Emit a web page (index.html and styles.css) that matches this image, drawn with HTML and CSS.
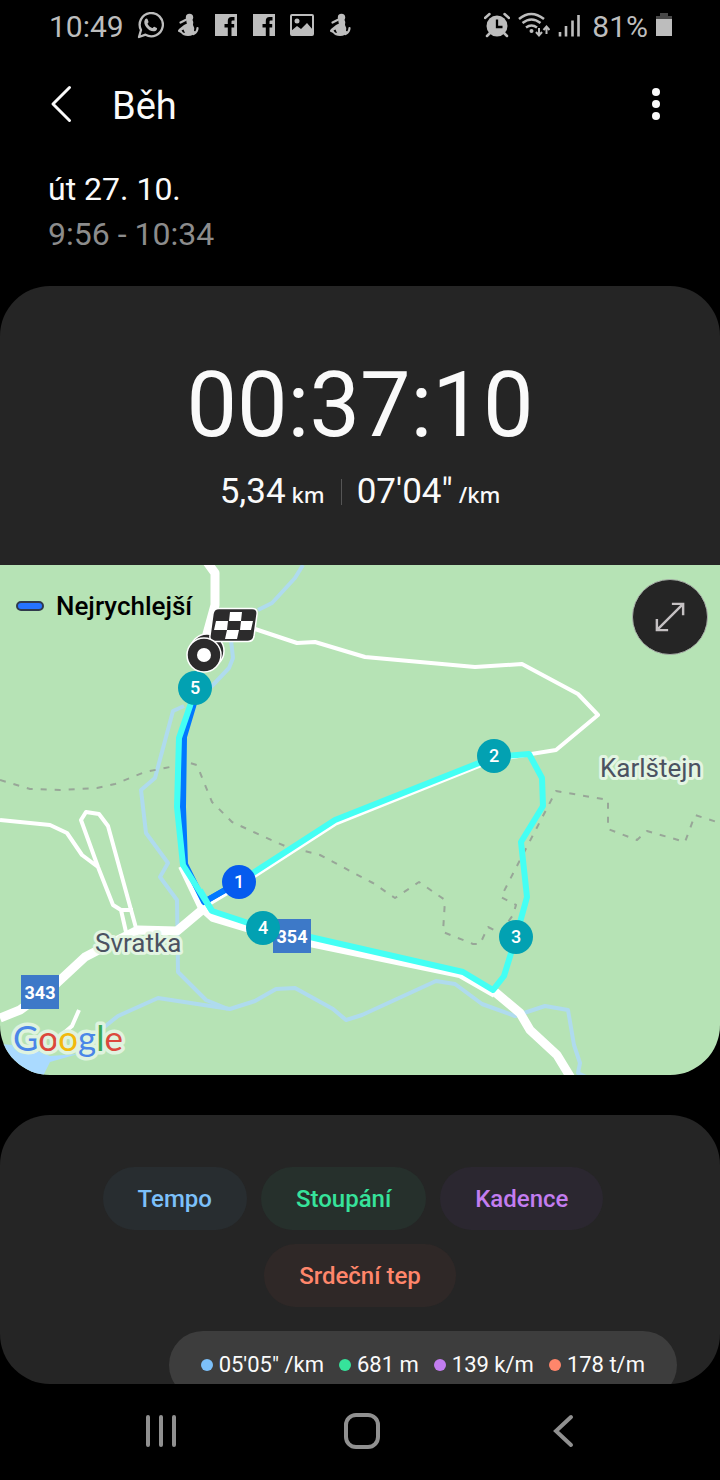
FILE: index.html
```html
<!DOCTYPE html>
<html lang="cs">
<head>
<meta charset="utf-8">
<meta name="viewport" content="width=device-width, initial-scale=1">
<title>Běh</title>
<link rel="stylesheet" href="styles.css">
</head>
<body>
<svg width="0" height="0" class="defs" aria-hidden="true">
  <symbol id="figure" viewBox="0 0 28 28">
    <path d="M6.500 10.500l6-3M23.500 16q0 4-4 6" fill="none" stroke="currentColor" stroke-width="2.200" stroke-linecap="round"/>
    <circle cx="15.500" cy="5.500" r="3.700" fill="currentColor"/>
    <path d="M12.500 8h6q1.500 2 .5 5 2 3 1 6 1 0 1.500 1-2 4-7.500 4-5 0-7-3l-3-1.500q-.500-1 1-2.500l5-4 3-1.500q-1-1.500-.500-3.500z" fill="currentColor"/>
    <path d="M7.500 18.500l2-1 1.500 3.500-2-.500z" fill="#000"/>
  </symbol>
  <symbol id="fb" viewBox="0 0 28 28">
    <path d="M3 2h22v22h-5.500v-8.500h2.700v-3.500h-2.700V9.500q0-1 1.200-1h1.800V5h-3q-3.700 0-3.700 4v3h-3.300v3.500h3.300V24H3z" fill="currentColor"/>
  </symbol>
</svg>
<div class="statusbar">
  <span class="clock">10:49</span>
  <div class="notices">
    <svg viewBox="0 0 28 28" aria-hidden="true"><path d="M3 25l2-7a11.600 11.600 0 1 1 4.500 4.700z" fill="none" stroke="currentColor" stroke-width="2.300" stroke-linejoin="round"/><path d="M9 7.500c1-1.500 2.300-1 2.700 0l.8 2.200c.2 1-1.200 1.700-.9 2.300 1 2 2.500 3.200 4.500 4 .8.200 1.400-1.600 2.200-1.300l2.500 1.300c.8.500-.2 2.500-1.500 3-3 1.200-7-1-9-3.800-2-2.700-2.700-5.500-1.300-7.700z" fill="currentColor"/></svg>
    <svg aria-hidden="true"><use href="#figure"/></svg>
    <svg aria-hidden="true"><use href="#fb"/></svg>
    <svg aria-hidden="true"><use href="#fb"/></svg>
    <svg viewBox="0 0 28 28" aria-hidden="true"><rect x="3" y="3" width="22" height="20" rx="1" fill="none" stroke="currentColor" stroke-width="2"/><circle cx="9" cy="9" r="2.500" fill="currentColor"/><path d="M3 19l6-5 4 3 6-6 6 7v5H3z" fill="currentColor"/></svg>
    <svg aria-hidden="true"><use href="#figure"/></svg>
  </div>
  <div class="system">
    <svg class="alarm" viewBox="0 0 26 28" aria-hidden="true"><circle cx="13" cy="14" r="10.500" fill="currentColor"/><path d="M1 6l4.500-4M25 6l-4.500-4M6 21l-3 3M20 21l3 3" stroke="currentColor" stroke-width="2.500" stroke-linecap="round"/><path d="M13 7.500V15h5.500" fill="none" stroke="#000" stroke-width="2.300"/></svg>
    <svg class="wifi" viewBox="0 0 32 28" aria-hidden="true"><path d="M1 7q12-10 25 0M4.500 11q9-7 18 0M8 15.500q5.500-4 11 0" fill="none" stroke="currentColor" stroke-width="2.500"/><circle cx="13.500" cy="19" r="2" fill="currentColor"/><path d="M21 16v7M18 20l3 3.500 3-3.500M28.500 22v-7M25.500 18l3-3.500 3 3.500" fill="none" stroke="currentColor" stroke-width="2"/></svg>
    <svg class="signal" viewBox="0 0 22 28" aria-hidden="true"><path d="M2 20v4.500M8 14v10.500M14.500 8.500v16M20.500 3v21.500" stroke="currentColor" stroke-width="2.600"/></svg>
    <span>81%</span>
    <svg class="battery" viewBox="0 0 16 28" aria-hidden="true"><path d="M4 1h8v3h4v4H0V4h4z" fill="#484848"/><path d="M0 7h16v17H0z" fill="currentColor"/></svg>
  </div>
</div>
<header class="appbar">
  <button class="icon-button" aria-label="Zpět"><svg viewBox="0 0 22 38" aria-hidden="true"><path d="M19.500 2.500L3 19l16.500 16.500" fill="none" stroke="currentColor" stroke-width="3" stroke-linecap="round" stroke-linejoin="round"/></svg></button>
  <h1>Běh</h1>
  <button class="icon-button more" aria-label="Další možnosti"><svg viewBox="0 0 22 38" aria-hidden="true"><g fill="currentColor"><circle cx="11" cy="7" r="4"/><circle cx="11" cy="19" r="4"/><circle cx="11" cy="31" r="4"/></g></svg></button>
</header>
<main class="content">
  <div class="when">
    <p>út 27. 10.</p>
    <p class="hours">9:56 - 10:34</p>
  </div>
  <section class="card workout">
    <div class="summary">
      <div class="timer">00:37:10</div>
      <div class="totals">
        <p>5,34<span>km</span></p>
        <p>07'04"<span>/km</span></p>
      </div>
    </div>
    <div class="map">
      <svg class="map-canvas" viewBox="0 565 720 510" role="img" aria-label="Mapa trasy">
        <path d="M0 1044l25 2 25 10 28-2-28 8-8 16H0z" fill="#aadaff"/>
        <g class="stream">
          <path d="M303 565l-8 13-23 25-14 7"/>
          <path d="M231 640l2 18-4 10-18 19M184 706l-11 5-18 67-14 12 5 43 22 30-8 14 17 23 1 72 28 28 22 9"/>
          <path d="M98 1032l20-16 40-18 72 11 25-8 21-12 19-1 38 21 13 11 16-5 74-34 19 3 27 20 33 12 30-10 23 4 6 35 6 18-2 10 8 4"/>
        </g>
        <path class="trail" d="M0 780l30 9 30 1 37-2 18-4 30-12 20-4 25-5 7 2 6 15 9 22 20 20 28 13 25 11 35 9 32 17 21 11 22 15 24-16 26 18-2 32 30 12h7l8-17 12 6 13-18 3-10-15-8 19-37 36-69 52 9v29l29 11 10-9 38 11 10-27 25 8"/>
        <g class="lane">
          <path d="M255 629l42 14 18-1 50 15 110 10 47-3 56 30 20 21-42 35-62 10-159 64-96 62-35 21"/>
          <path d="M0 820l50 5 17 8 15 22 16 12M98 867l-17-47 5-8 13 2 9 12 28 102M98 867l15 38 8 5h12M121 910l5 22M79 1010l-7 16-14 12"/>
        </g>
        <g class="road">
          <path d="M207 562l8 11v32l-8 29-3 16M0 1018l20-8 37-27 28-26 25-13 28-14 39 1 25-21M495 992l25 21 10 17 27 25 14 23"/>
          <path class="narrow" d="M182 866l20 42 11 10 50 15 47 10 150 31 35 20"/>
        </g>
        <text class="place" x="95" y="952">Svratka</text>
        <text class="place" x="600" y="777">Karlštejn</text>
        <path class="track fastest" d="M195 700l-11 37-1 70 2 57 19 38 35-20"/>
        <path class="track" d="M195 688l-5 18-11 32-2 69 6 58 29 46 51 17 47 9 153 35 30 18 11-14 12-39 11-40-6-55 22-36-1-28-13-24-35 3-159 63-96 62"/>
        <path class="track fastest" d="M206 901l33-19"/>
        <path class="track" d="M200 890l12 21"/>
        <g class="shield"><rect x="273" y="919" width="38" height="34"/><text x="292" y="943">354</text><rect x="21" y="975" width="38" height="34"/><text x="40" y="999">343</text></g>
        <g class="marker">
          <circle cx="263" cy="928" r="17"/><text x="263" y="934">4</text>
          <circle cx="516" cy="937" r="17"/><text x="516" y="943">3</text>
          <circle cx="494" cy="756" r="17"/><text x="494" y="762">2</text>
          <circle cx="195" cy="688" r="17"/><text x="195" y="694">5</text>
          <circle class="first" cx="239" cy="882" r="17"/><text x="239" y="888">1</text>
        </g>
        <g fill="#2c2b2c" stroke="#fff" stroke-width="1.500">
          <circle cx="207" cy="651" r="17"/>
          <path d="M219 608.500h33q6 0 5 6l-3 22q-1 5-6 5h-33q-6 0-5-6l3-22q1-5 6-5z"/>
          <circle cx="204" cy="655" r="17"/>
        </g>
        <circle cx="204" cy="655" r="7" fill="#fff"/>
        <path d="M230 612h12l-1 9h-12zM216 621h12l-1 9h-13zM241 621h12l-2 9h-11zM227 630h12l-2 9h-12z" fill="#fff"/>
        <text class="google" x="13" y="1051"><tspan fill="#4a86e8">G</tspan><tspan fill="#dc483c">o</tspan><tspan fill="#f2b90c">o</tspan><tspan fill="#4a86e8">g</tspan><tspan fill="#3aa757">l</tspan><tspan fill="#dc483c">e</tspan></text>
      </svg>
      <div class="fastest-key"><i></i>Nejrychlejší</div>
      <button class="expand" aria-label="Zvětšit mapu"><svg viewBox="0 0 32 32" aria-hidden="true"><path d="M2 30L30 2M18 2h12v12M2 18v12h12" fill="none" stroke="currentColor" stroke-width="2.600"/></svg></button>
    </div>
  </section>
  <section class="card chart">
    <div class="chips">
      <div class="chip-row trailing">
        <button class="chip pace">Tempo</button>
        <button class="chip climb">Stoupání</button>
        <button class="chip cadence">Kadence</button>
      </div>
      <div class="chip-row">
        <button class="chip heart">Srdeční tep</button>
      </div>
    </div>
    <ul class="values">
      <li class="pace">05'05" /km</li>
      <li class="climb">681 m</li>
      <li class="cadence">139 k/m</li>
      <li class="heart">178 t/m</li>
    </ul>
  </section>
</main>
<nav class="navbar">
  <button aria-label="Poslední aplikace"><svg viewBox="0 0 40 40" aria-hidden="true"><path d="M7 6v28M20 6v28M33 6v28" stroke="currentColor" stroke-width="4" stroke-linecap="round"/></svg></button>
  <button aria-label="Domů"><svg viewBox="0 0 40 40" aria-hidden="true"><rect x="4" y="4" width="32" height="32" rx="10" fill="none" stroke="currentColor" stroke-width="4"/></svg></button>
  <button aria-label="Zpět"><svg viewBox="0 0 40 40" aria-hidden="true"><path d="M28 6L13 20l15 14" fill="none" stroke="currentColor" stroke-width="4" stroke-linecap="round"/></svg></button>
</nav>
</body>
</html>
```
FILE: styles.css
```css
* { box-sizing: border-box; }
body {
  margin: 0;
  height: 100vh;
  display: flex;
  flex-direction: column;
  background: #000;
  color: #fafafa;
  font-family: Roboto, "Liberation Sans", sans-serif;
}
h1, p, ul { margin: 0; padding: 0; font-weight: 400; }
button { border: 0; padding: 0; background: none; color: inherit; font: inherit; cursor: pointer; }
svg { display: block; }
.defs { position: absolute; }

.statusbar {
  display: flex;
  align-items: center;
  height: 52px;
  padding: 0 48px 0 49px;
  color: #bdbdbd;
  font-size: 30px;
}
.notices { display: flex; gap: 10px; margin-left: 12px; }
.notices svg { width: 28px; height: 28px; }
.system { display: flex; align-items: center; gap: 8px; margin-left: auto; }
.system svg { height: 28px; }
.system span { margin-left: 4px; }
.alarm { width: 26px; }
.wifi { width: 32px; }
.signal { width: 22px; }
.battery { width: 16px; }

.appbar {
  display: flex;
  align-items: center;
  height: 108px;
  padding: 0 53px 4px 50px;
}
.appbar h1 { margin-left: 40px; padding-top: 4px; font-size: 38px; line-height: 48px; }
.icon-button svg { width: 22px; height: 38px; }
.more { margin-left: auto; }

.content {
  flex: 1;
  min-height: 0;
  overflow-y: auto;
  scrollbar-width: none;
  border-radius: 0 0 50px 50px;
}
.when { padding: 7px 48px 29px; font-size: 32px; line-height: 45px; }
.hours { color: #8c8c8c; }
.card { background: #252525; border-radius: 50px; overflow: hidden; }

.summary { padding: 72px 24px 47px; text-align: center; }
.timer { font-size: 90px; line-height: 96px; }
.totals {
  display: flex;
  justify-content: center;
  align-items: center;
  margin-top: 12px;
  font-size: 35px;
  line-height: 52px;
}
.totals p { height: 52px; padding-right: 16px; }
.totals p + p {
  padding: 0 0 0 16px;
  background: linear-gradient(#555, #555) left center / 1px 26px no-repeat;
}
.totals span { margin-left: 6px; font-family: "Noto Sans", sans-serif; font-size: 22px; line-height: 1; font-weight: 500; }

.map { position: relative; background: #b6e3b5; }
.map-canvas { width: 100%; height: auto; }
.map-canvas path { stroke-linejoin: round; }
.stream { fill: none; stroke: #afdbee; stroke-width: 4; }
.trail { fill: none; stroke: #98a698; stroke-width: 2; stroke-dasharray: 6 8; }
.lane { fill: none; stroke: #fff; stroke-width: 4; }
.road { fill: none; stroke: #fff; stroke-width: 9; }
.road .narrow { stroke-width: 8; }
.place { font-size: 26px; fill: #4b5261; stroke: #e3f5e2; stroke-width: 6px; stroke-linejoin: round; paint-order: stroke; }
.track { fill: none; stroke: #44fff4; stroke-width: 6; }
.track.fastest { stroke: #0078ff; }
.shield rect { fill: #3d79c8; }
.shield text { fill: #fff; font-size: 18px; font-weight: 700; text-anchor: middle; }
.marker circle { fill: #02a1b2; }
.marker .first { fill: #055bee; }
.marker text { fill: #fff; font-size: 18px; font-weight: 500; text-anchor: middle; }
.google { font-family: Lato, sans-serif; font-size: 35px; stroke: #dff3df; stroke-width: 7px; stroke-linejoin: round; paint-order: stroke; }

.fastest-key {
  position: absolute;
  top: 26px;
  left: 16px;
  display: flex;
  align-items: center;
  gap: 12px;
  color: #000;
  font-size: 26px;
  line-height: 30px;
  font-weight: 500;
}
.fastest-key i { width: 28px; height: 10px; border: 2px solid #303a4c; border-radius: 5px; background: #2573ff; }
.expand {
  position: absolute;
  top: 14px;
  right: 12px;
  display: grid;
  place-items: center;
  width: 76px;
  height: 76px;
  border: 1px solid #a9b0a9;
  border-radius: 50%;
  background: #252525;
  color: #c5c1c3;
}
.expand svg { width: 30px; height: 30px; }

.chart { margin-top: 40px; padding-top: 52px; }
.chips { display: grid; gap: 14px; }
.chip-row { display: flex; justify-content: center; gap: 14px; }
.trailing { padding-right: 14px; }
.chip { height: 63px; padding: 0 35px; border-radius: 32px; font-size: 24px; font-weight: 500; }
.pace { color: #7cc0fa; }
.climb { color: #36e39b; }
.cadence { color: #c37df0; }
.heart { color: #ff866b; }
.chip.pace { background: #282d30; }
.chip.climb { background: #26302c; }
.chip.cadence { background: #2b2730; }
.chip.heart { background: #2f2827; }
.values {
  display: flex;
  width: fit-content;
  gap: 15px;
  margin: 24px 43px 40px auto;
  padding: 0 32px;
  border-radius: 34px;
  background: #3d3d3d;
  font-size: 22px;
  line-height: 68px;
  list-style: none;
}
.values li { display: flex; align-items: center; gap: 6px; }
.values li::before { content: ""; width: 12px; height: 12px; border-radius: 50%; background: currentColor; }
.values li { -webkit-text-fill-color: #fafafa; }

.navbar {
  display: grid;
  grid-template-columns: repeat(3, 1fr);
  height: 96px;
  padding: 0 56px 2px 60px;
  color: #909090;
}
.navbar button { display: grid; place-items: center; }
.navbar svg { width: 40px; height: 40px; }
```
